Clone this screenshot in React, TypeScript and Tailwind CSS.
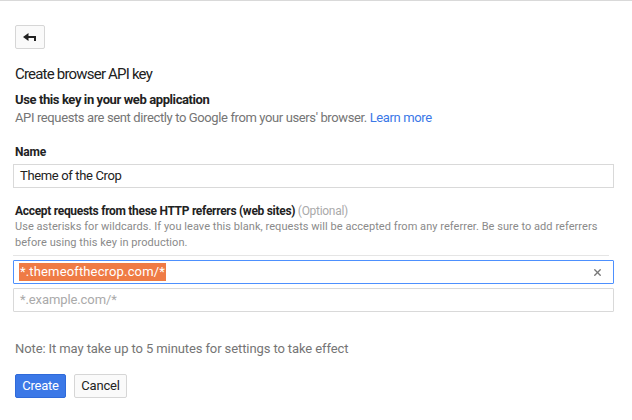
import { X } from "lucide-react";

function BackIcon() {
  return (
    <svg width="14" height="10" viewBox="0 0 14 10" fill="#222">
      <polygon points="0,5 5.5,1 5.5,9" />
      <rect x="5" y="4" width="8" height="2" />
      <rect x="11" y="4" width="2" height="5" />
    </svg>
  );
}

export default function App() {
  return (
    <div
      className="min-h-[420px] w-[632px] border-t border-[#d9d9d9] bg-white pl-[13px] pr-[18px] pt-[24px] text-[#222]"
      style={{ fontFamily: "Roboto, 'Liberation Sans', sans-serif" }}
    >
      <div className="flex flex-col">
        <button className="ml-[2px] flex h-[24px] w-[30px] items-center justify-center rounded-[2px] border border-[#d6d6d6] bg-[#fafafa]">
          <BackIcon />
        </button>

        <h1 className="ml-[2px] mt-[15px] text-[15px] leading-[20px] font-normal tracking-[-0.8px] text-[#212121]">
          Create browser API key
        </h1>

        <div className="ml-[2px] mt-[7px] text-[13px] leading-[18px] font-bold tracking-[-0.4px]">
          Use this key in your web application
        </div>
        <div className="ml-[2px] text-[13px] leading-[18px] tracking-[-0.38px] text-[#757575]">
          API requests are sent directly to Google from your users' browser.{" "}
          <a className="text-[#3b78e7]">Learn more</a>
        </div>

        <label className="ml-[2px] mt-[17px] text-[12px] leading-[16px] font-bold tracking-[-0.2px]">Name</label>
        <div className="mt-[4px] flex h-[24px] items-center border border-[#d9d9d9] px-[6px] text-[13px] tracking-[-0.35px] text-[#222]">
          Theme of the Crop
        </div>

        <div className="ml-[2px] mt-[15px] text-[12px] leading-[16px] tracking-[-0.3px]">
          <span className="font-bold">Accept requests from these HTTP referrers (web sites)</span>{" "}
          <span className="text-[#aaaaaa]">(Optional)</span>
        </div>
        <p className="ml-[2px] text-[11px] leading-[16px] tracking-[0.05px] text-[#8a8a8a]">
          Use asterisks for wildcards. If you leave this blank, requests will be accepted from any referrer. Be sure to add referrers before using this key in production.
        </p>

        <div className="mt-[4px] mr-[5px] border-t border-[#e5e5e5]" />

        <div className="mt-[4px] flex h-[24px] items-center justify-between rounded-[1px] border border-[#4d90fe] pl-[5px] pr-[10px] text-[13px] tracking-[0.15px]">
          <span className="bg-[#ef7b45] px-[1px] leading-[18px] text-white">*.themeofthecrop.com/*</span>
          <X size={11} strokeWidth={3} className="text-[#777]" />
        </div>
        <div className="mt-[4px] flex h-[24px] items-center rounded-[1px] border border-[#d9d9d9] px-[6px] text-[13px] tracking-[-0.1px] text-[#aaaaaa]">
          *.example.com/*
        </div>

        <div className="ml-[2px] mt-[28px] text-[13px] leading-[18px] tracking-[-0.1px] text-[#757575]">
          Note: It may take up to 5 minutes for settings to take effect
        </div>

        <div className="ml-[2px] mt-[16px] flex gap-[8px]">
          <button className="h-[24px] w-[51px] rounded-[2px] border border-[#2f6ad9] bg-[#3b78e7] text-[13px] tracking-[-0.2px] text-white">
            Create
          </button>
          <button className="h-[24px] w-[53px] rounded-[2px] border border-[#d6d6d6] bg-[#fafafa] text-[13px] tracking-[-0.2px] text-[#222]">
            Cancel
          </button>
        </div>
      </div>
    </div>
  );
}
